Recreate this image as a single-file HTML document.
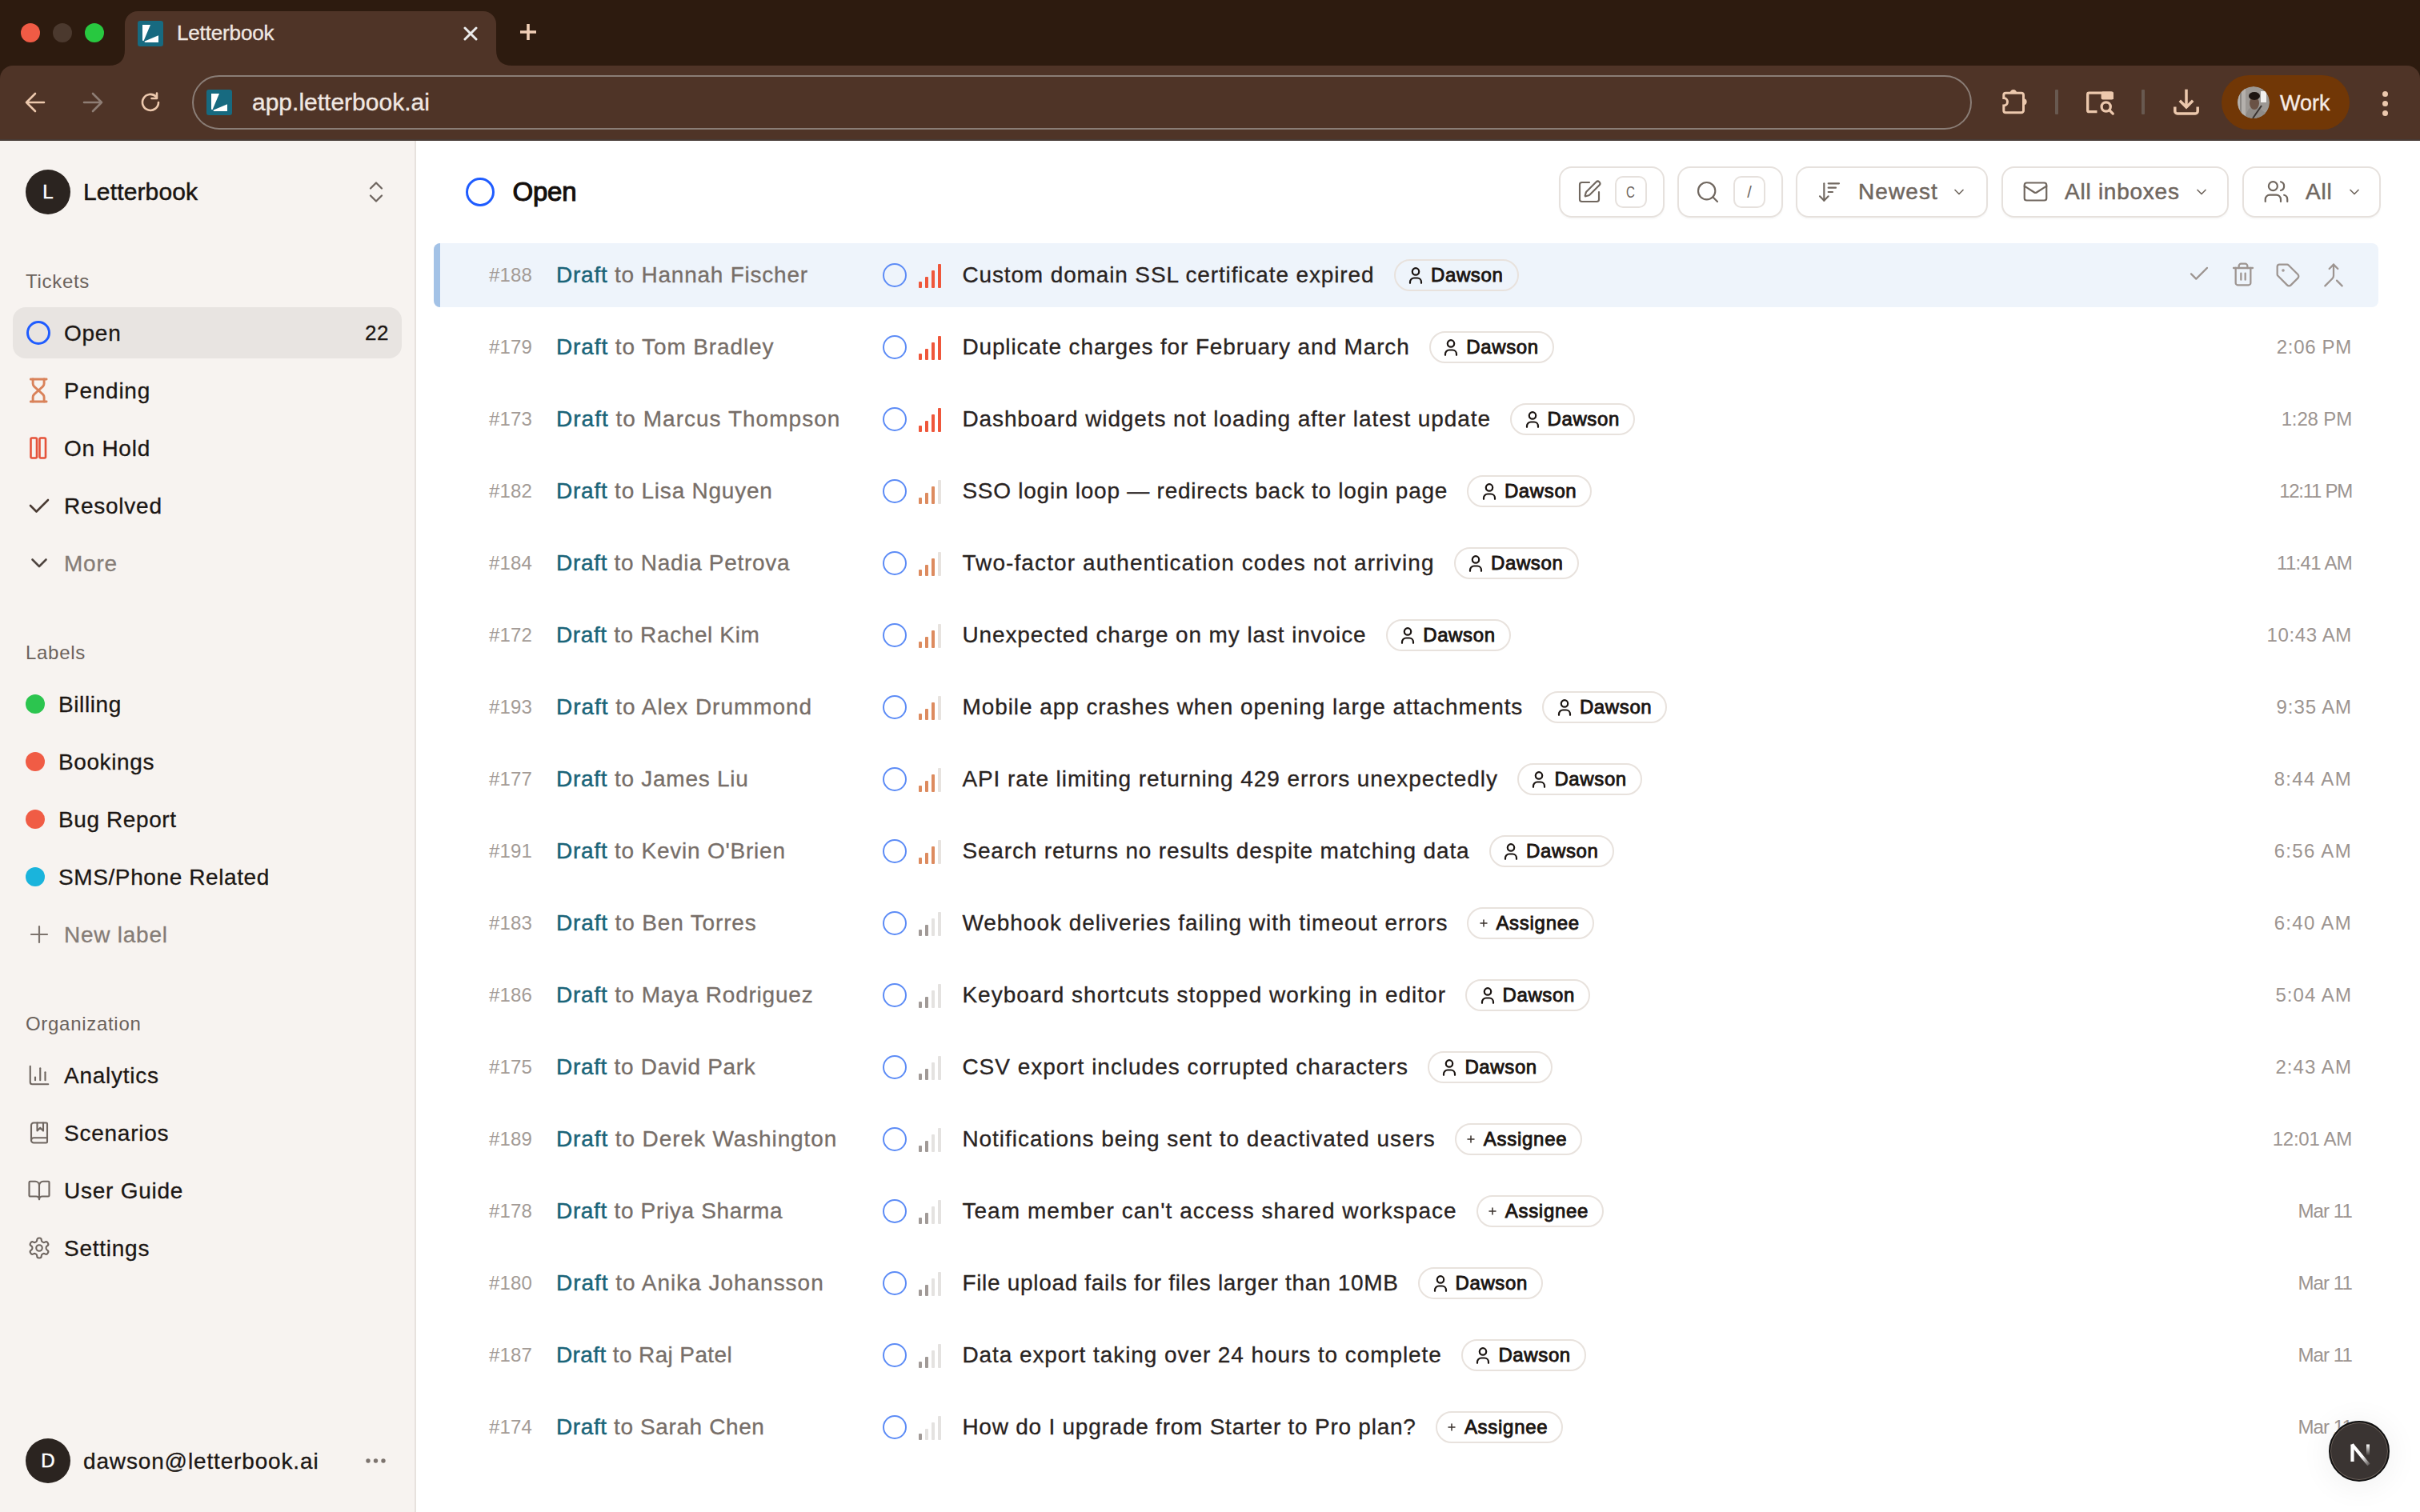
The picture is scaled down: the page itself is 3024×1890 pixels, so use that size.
<!DOCTYPE html>
<html><head><meta charset="utf-8"><style>
*{box-sizing:border-box;margin:0;padding:0}
html,body{width:3024px;height:1890px;overflow:hidden;background:#fff;font-family:"Liberation Sans",sans-serif}
#tabstrip{position:absolute;left:0;top:0;width:3024px;height:110px;background:#2d1b0f}
.tl{position:absolute;top:29px;width:24px;height:24px;border-radius:50%}
.fav{position:absolute;width:32px;height:32px}
.fav svg{display:block}
#tabtitle{position:absolute;left:221px;top:26px;line-height:30px;font-size:26px;color:#efe7e1;letter-spacing:-0.15px;-webkit-text-stroke:0.35px #efe7e1}
#toolbar{position:absolute;left:0;top:82px;width:3024px;height:92px;background:#4f3427;border-radius:16px 16px 0 0}
#tbline{position:absolute;left:0;top:174px;width:3024px;height:2px;background:#473b36}
#urlbar{position:absolute;left:240px;top:94px;width:2224px;height:68px;border:2px solid #8a7d76;border-radius:34px}
#urltext{position:absolute;left:315px;top:110px;line-height:36px;font-size:30px;color:#f0e7e1;-webkit-text-stroke:0.35px #f0e7e1}
.sep{position:absolute;top:112px;width:3.5px;height:31px;background:#685950;border-radius:1px}
#work{position:absolute;left:2776px;top:94px;width:160px;height:68px;border-radius:34px;background:#713706}
#avatar{position:absolute;left:20px;top:14px;width:40px;height:40px;border-radius:50%;overflow:hidden} #avatar svg{display:block}
#work span{position:absolute;left:73px;top:17px;line-height:36px;font-size:27px;color:#f6ece6;-webkit-text-stroke:0.35px #f6ece6}
.kdot{position:absolute;left:2977px;width:7px;height:7px;border-radius:50%;background:#ecc8ad}

#sidebar{position:absolute;left:0;top:176px;width:520px;height:1714px;background:#f7f3f0;border-right:2px solid #e7e2de}
#main{position:absolute;left:520px;top:176px;width:2504px;height:1714px;background:#fff}
.ws-av{position:absolute;left:32px;top:212px;width:56px;height:56px;border-radius:50%;background:#2b2420;color:#fff;font-size:24px;line-height:56px;text-align:center;-webkit-text-stroke:0.5px #fff}
.ws-name{position:absolute;left:104px;top:222px;line-height:36px;font-size:30px;color:#1a1512;letter-spacing:0.15px;-webkit-text-stroke:0.5px #1a1512}
.slab{position:absolute;left:32px;margin-top:1px;line-height:30px;font-size:24px;color:#6b625c;letter-spacing:0.7px}
.si{position:absolute;left:16px;width:486px;height:64px}
.sic{position:absolute;left:17px;top:16px;width:32px;height:32px;display:flex;align-items:center;justify-content:center}
.sic svg{display:block}
.sil{position:absolute;left:64px;top:15px;line-height:36px;font-size:28px;color:#1c1714;letter-spacing:0.75px;-webkit-text-stroke:0.3px currentColor}
.si.muted .sil{color:#857c76}
.shl{position:absolute;left:16px;width:486px;height:64px;background:#e8e4e1;border-radius:16px}
.cnt{position:absolute;left:400px;width:86px;height:64px;line-height:64px;text-align:right;font-size:26px;color:#1c1714;letter-spacing:0.5px;-webkit-text-stroke:0.3px #1c1714}
.lbl{position:absolute;left:16px;width:486px;height:64px}
.ldot{position:absolute;left:16px;top:20px;width:24px;height:24px;border-radius:50%}
.lll{position:absolute;left:57px;top:15px;line-height:36px;font-size:28px;color:#1c1714;letter-spacing:0.6px;-webkit-text-stroke:0.3px currentColor}
.me-av{position:absolute;left:32px;top:1798px;width:56px;height:56px;border-radius:50%;background:#2b2420;color:#fff;font-size:24px;line-height:56px;text-align:center;-webkit-text-stroke:0.5px #fff}
.me{position:absolute;left:104px;top:1809px;line-height:36px;font-size:28px;color:#1c1714;letter-spacing:0.85px;-webkit-text-stroke:0.3px #1c1714}
.medots{position:absolute;left:455px;top:1822px;opacity:0.9}

.hcirc{position:absolute;left:582px;top:222px;width:36px;height:36px;border:3.5px solid #1f5cff;border-radius:50%}
.htitle{position:absolute;left:640.5px;top:220px;line-height:40px;font-size:33px;color:#140f0c;letter-spacing:-0.2px;-webkit-text-stroke:1.05px #140f0c}
.btn{position:absolute;top:208px;height:64px;border:2px solid #e6e1dd;border-radius:16px;background:#fff;box-shadow:0 2px 2px rgba(0,0,0,0.03)}
.bi{position:absolute}
.bi svg{display:block}
.kbd{position:absolute;top:10px;width:40px;height:40px;border:2px solid #e6e1dd;border-radius:10px;text-align:center;line-height:36px;font-size:20px;color:#6e6660;font-family:"Liberation Sans",sans-serif}
.bt{position:absolute;top:12px;line-height:36px;font-size:28px;color:#70675f;letter-spacing:0.75px;-webkit-text-stroke:0.5px #70675f}

.row{position:absolute;left:542px;width:2430px;height:80px}
.row.sel{background:#eef4fb;border-radius:8px}
.row.sel::before{content:"";position:absolute;left:0;top:0;width:8px;height:80px;background:#a3c2e6;border-radius:8px 0 0 8px}
.rid{position:absolute;left:56px;width:80px;top:22px;line-height:36px;text-align:center;font-size:24px;color:#a39b96;letter-spacing:0.1px}
.who{position:absolute;left:153px;top:22px;line-height:36px;font-size:28px;color:#776e68;letter-spacing:0.75px;white-space:nowrap;-webkit-text-stroke:0.3px #776e68}
.draft{color:#1a6478;-webkit-text-stroke:0.45px #1a6478}
.stat{position:absolute;left:561px;top:25px;width:30px;height:30px;border:2.8px solid #5d8cf6;border-radius:50%}
.bars{position:absolute;left:606px;top:26px;width:30px;height:30px}
.subj{position:absolute;left:660.4px;top:22px;line-height:36px;font-size:28px;color:#29231f;white-space:nowrap;-webkit-text-stroke:0.3px #29231f}
.pill{position:absolute;top:20px;width:156px;height:40px;border:2px solid #e8e2dd;border-radius:20px}
.pill svg{display:block;position:absolute;left:16.6px;top:7.8px}
.pill span{position:absolute;left:44.5px;top:3px;line-height:30px;font-size:24px;color:#1a1411;letter-spacing:0.62px;-webkit-text-stroke:0.85px #1a1411}
.pill.asg{width:159px}
.pill.asg svg{left:12.4px;top:11.7px} .pill.asg span{left:34px;letter-spacing:0.72px}
.time{position:absolute;right:33px;top:22px;line-height:36px;font-size:24px;color:#9c9490;letter-spacing:0.35px}
.acts .act{position:absolute;top:24px}
.act svg{display:block}
#nbadge{position:absolute;left:2910px;top:1776px;width:76px;height:76px;border-radius:50%;background:#3a3432;border:2px solid #111;box-shadow:0 0 0 1px #6a5f58 inset,0 4px 40px rgba(0,0,0,0.07)}
</style></head><body>

<div id="tabstrip"></div>
<div class="tl" style="left:26px;background:#f05b45"></div>
<div class="tl" style="left:66px;background:#4b392e"></div>
<div class="tl" style="left:106px;background:#28c840"></div>
<svg style="position:absolute;left:136px;top:14px" width="504" height="70" viewBox="0 0 504 70"><path d="M0 68 Q20 68 20 48 V16 A16 16 0 0 1 36 0 H468 A16 16 0 0 1 484 16 V48 Q484 68 504 68 V70 H0Z" fill="#4f3427"/></svg>
<div class="fav" style="left:172px;top:26px"><svg width="32" height="32" viewBox="0 0 32 32"><rect width="32" height="32" rx="3" fill="#176a80"/><path d="M6 5H16L7.8 24.6C7.2 25.8 6 25.2 6 23.5Z M9.5 27H26V18.3L8.8 25.6C8.2 26 8.5 27 9.5 27Z" fill="#fff"/></svg></div>
<div id="tabtitle">Letterbook</div>
<div style="position:absolute;left:579px;top:33px"><svg width="18" height="18" viewBox="0 0 18 18" fill="none" stroke="#ebebeb" stroke-width="3" stroke-linecap="round" stroke-linejoin="round" style="display:block"><path d="M2 2l14 14M16 2L2 16"/></svg></div>
<div style="position:absolute;left:650px;top:30px"><svg width="20" height="20" viewBox="0 0 20 20" style="display:block"><path d="M0 10h20M10 0v20" stroke="#f1cfb6" stroke-width="3.6"/></svg></div>
<div id="toolbar"></div>
<div id="tbline"></div>
<div style="position:absolute;left:31px;top:115px"><svg width="26" height="26" viewBox="0 0 26 26" fill="none" stroke="#ecc8ad" stroke-width="2.6" stroke-linecap="round" stroke-linejoin="round" style="display:block"><path d="M24 13H2M13 2L2 13l11 11"/></svg></div>
<div style="position:absolute;left:103px;top:115px"><svg width="26" height="26" viewBox="0 0 26 26" fill="none" stroke="#8e7d74" stroke-width="2.6" stroke-linecap="round" stroke-linejoin="round" style="display:block"><path d="M2 13h22M13 2l11 11-11 11"/></svg></div>
<div style="position:absolute;left:174px;top:114px"><svg width="28" height="28" viewBox="0 0 28 28" fill="none" stroke="#ecc8ad" stroke-width="2.6" stroke-linecap="round" stroke-linejoin="round" style="display:block"><path d="M24 14a10 10 0 1 1-3-7.2"/><path d="M22 2.5v6.5h-6.5"/></svg></div>
<div id="urlbar"></div>
<div class="fav" style="left:258px;top:112px"><svg width="32" height="32" viewBox="0 0 32 32"><rect width="32" height="32" rx="3" fill="#176a80"/><path d="M6 5H16L7.8 24.6C7.2 25.8 6 25.2 6 23.5Z M9.5 27H26V18.3L8.8 25.6C8.2 26 8.5 27 9.5 27Z" fill="#fff"/></svg></div>
<div id="urltext">app.letterbook.ai</div>
<div style="position:absolute;left:2500px;top:108px"><svg width="40" height="40" viewBox="0 0 40 40" style="display:block"><path d="M3.8 10.7a2.5 2.5 0 0 1 2.5-2.5H26a2.5 2.5 0 0 1 2.5 2.5V30.2a2.5 2.5 0 0 1-2.5 2.5H6.3a2.5 2.5 0 0 1-2.5-2.5V24a4.7 4.7 0 0 0 0-9.4Z" fill="none" stroke="#ecc8ad" stroke-width="3"/><path d="M11.6 8.2a4.3 4.3 0 0 1 8.6 0Z" fill="#ecc8ad"/><path d="M28.5 15.2a4.1 4.1 0 0 1 0 8.2Z" fill="#ecc8ad"/></svg></div>
<div class="sep" style="left:2568px"></div>
<div style="position:absolute;left:2604px;top:108px"><svg width="40" height="40" viewBox="0 0 40 40" style="display:block" fill="none" stroke="#ecc8ad" stroke-width="3.3"><path d="M16.5 31.6H6.4a1.7 1.7 0 0 1-1.7-1.7V9.9a1.7 1.7 0 0 1 1.7-1.7H33.6a1.7 1.7 0 0 1 1.7 1.7V16"/><rect x="21.6" y="6.5" width="15.4" height="10" rx="2" fill="#ecc8ad" stroke="none"/><circle cx="27.7" cy="25.5" r="5.6"/><path d="M31.8 29.6L36.3 34.1" stroke-linecap="round"/></svg></div>
<div class="sep" style="left:2676px"></div>
<div style="position:absolute;left:2712px;top:108px"><svg width="40" height="40" viewBox="0 0 40 40" style="display:block" fill="none" stroke="#ecc8ad" stroke-width="3.5"><path d="M20 3.7V26"/><path d="M11.8 17.8L20 26L28.2 17.8"/><path d="M5.8 25.5V31a3 3 0 0 0 3 3H31.2a3 3 0 0 0 3-3V25.5"/></svg></div>
<div id="work"><div id="avatar"><svg width="40" height="40" viewBox="0 0 40 40"><defs><clipPath id="avc"><circle cx="20" cy="20" r="20"/></clipPath></defs><g clip-path="url(#avc)"><rect width="40" height="40" fill="#9c9894"/><rect x="0" y="0" width="10" height="40" fill="#b4b0ac"/><rect x="3" y="0" width="2" height="40" fill="#8a8682"/><rect x="29" y="6" width="7" height="14" fill="#f2f0ee"/><path d="M8 40L14 28Q20 24 27 27L36 34V40Z" fill="#8f8b87"/><path d="M19 40L30 24" stroke="#3a3330" stroke-width="2"/><ellipse cx="21" cy="21" rx="6" ry="8" fill="#6a5245"/><ellipse cx="21" cy="12" rx="7" ry="5" fill="#1d1512"/></g></svg></div><span>Work</span></div>
<div class="kdot" style="top:114px"></div><div class="kdot" style="top:126px"></div><div class="kdot" style="top:138px"></div>

<div id="sidebar"></div>
<div id="main"></div>
<div class="ws-av">L</div>
<div class="ws-name">Letterbook</div>
<div style="position:absolute;left:458px;top:226px"><svg width="24" height="28" viewBox="0 0 24 28" fill="none" stroke="#6f6660" stroke-width="2.3" stroke-linecap="round" stroke-linejoin="round" style="display:block"><path d="M5 9.5l7-7 7 7M5 18.5l7 7 7-7"/></svg></div>
<div class="slab" style="top:336px">Tickets</div>
<div class="slab" style="top:800px">Labels</div>
<div class="slab" style="top:1264px">Organization</div>
<div class="shl" style="top:384px"></div>
<div class="si " style="top:384px"><div class="sic"><div style="position:absolute;left:0;top:1px;width:30px;height:30px;border:3px solid #1f5cff;border-radius:50%"></div></div><div class="sil">Open</div></div>
<div class="cnt" style="top:384px">22</div>
<div class="si " style="top:456px"><div class="sic"><svg width="24" height="32" viewBox="0.9 0 24 32" fill="none" stroke="#d9825a" stroke-width="2.9" stroke-linecap="round" stroke-linejoin="round" ><path d="M2 2h20M2 30h20"/><path d="M5 2v5.5c0 1.5.6 2.6 1.6 3.6L12 16l5.4-4.9c1-1 1.6-2.1 1.6-3.6V2"/><path d="M5 30v-5.5c0-1.5.6-2.6 1.6-3.6L12 16l5.4 4.9c1 1 1.6 2.1 1.6 3.6V30"/></svg></div><div class="sil">Pending</div></div>
<div class="si " style="top:528px"><div class="sic"><svg width="24" height="28" viewBox="0 0 24 28" fill="none" stroke="#e5533a" stroke-width="2.6" stroke-linecap="round" stroke-linejoin="round" ><rect x="1.5" y="1.5" width="7.5" height="25" rx="1.5"/><rect x="12.5" y="1.5" width="7.5" height="25" rx="1.5"/></svg></div><div class="sil">On Hold</div></div>
<div class="si " style="top:600px"><div class="sic"><svg width="26" height="20" viewBox="0 0 26 20" fill="none" stroke="#4a3b33" stroke-width="2.6" stroke-linecap="round" stroke-linejoin="round" ><path d="M2 10l7.5 7.5L24 3"/></svg></div><div class="sil">Resolved</div></div>
<div class="si muted" style="top:672px"><div class="sic"><svg width="22" height="14" viewBox="0 0 22 14" fill="none" stroke="#4f4540" stroke-width="2.6" stroke-linecap="round" stroke-linejoin="round" ><path d="M2.5 2.5l8.5 8.5 8.5-8.5"/></svg></div><div class="sil">More</div></div>
<div class="lbl" style="top:848px"><div class="ldot" style="background:#2cc54f"></div><div class="lll">Billing</div></div>
<div class="lbl" style="top:920px"><div class="ldot" style="background:#f05c45"></div><div class="lll">Bookings</div></div>
<div class="lbl" style="top:992px"><div class="ldot" style="background:#f05c45"></div><div class="lll">Bug Report</div></div>
<div class="lbl" style="top:1064px"><div class="ldot" style="background:#1ab4dc"></div><div class="lll">SMS/Phone Related</div></div>
<div class="si muted" style="top:1136px"><div class="sic"><svg width="24" height="24" viewBox="0 0 24 24" fill="none" stroke="#7c736d" stroke-width="2.2" stroke-linecap="round" stroke-linejoin="round" ><path d="M2 12h20M12 2v20"/></svg></div><div class="sil">New label</div></div>
<div class="si " style="top:1312px"><div class="sic"><svg width="30" height="30" viewBox="0 0 24 24" fill="none" stroke="#6f6660" stroke-width="1.7" stroke-linecap="round" stroke-linejoin="round" ><path d="M3 3v16a2 2 0 0 0 2 2h16"/><path d="M18 17V9"/><path d="M13 17V5"/><path d="M8 17v-3"/></svg></div><div class="sil">Analytics</div></div>
<div class="si " style="top:1384px"><div class="sic"><svg width="30" height="30" viewBox="0 0 24 24" fill="none" stroke="#6f6660" stroke-width="1.7" stroke-linecap="round" stroke-linejoin="round" ><path d="M10 2v8l3-3 3 3V2"/><path d="M4 19.5v-15A2.5 2.5 0 0 1 6.5 2H19a1 1 0 0 1 1 1v18a1 1 0 0 1-1 1H6.5a1 1 0 0 1 0-5H20"/></svg></div><div class="sil">Scenarios</div></div>
<div class="si " style="top:1456px"><div class="sic"><svg width="30" height="30" viewBox="0 0 24 24" fill="none" stroke="#6f6660" stroke-width="1.7" stroke-linecap="round" stroke-linejoin="round" ><path d="M12 7v14"/><path d="M3 18a1 1 0 0 1-1-1V4a1 1 0 0 1 1-1h5a4 4 0 0 1 4 4 4 4 0 0 1 4-4h5a1 1 0 0 1 1 1v13a1 1 0 0 1-1 1h-6a3 3 0 0 0-3 3 3 3 0 0 0-3-3z"/></svg></div><div class="sil">User Guide</div></div>
<div class="si " style="top:1528px"><div class="sic"><svg width="30" height="30" viewBox="0 0 24 24" fill="none" stroke="#6f6660" stroke-width="1.7" stroke-linecap="round" stroke-linejoin="round" ><path d="M12.22 2h-.44a2 2 0 0 0-2 2v.18a2 2 0 0 1-1 1.73l-.43.25a2 2 0 0 1-2 0l-.15-.08a2 2 0 0 0-2.73.73l-.22.38a2 2 0 0 0 .73 2.73l.15.1a2 2 0 0 1 1 1.72v.51a2 2 0 0 1-1 1.74l-.15.09a2 2 0 0 0-.73 2.73l.22.38a2 2 0 0 0 2.73.73l.15-.08a2 2 0 0 1 2 0l.43.25a2 2 0 0 1 1 1.73V20a2 2 0 0 0 2 2h.44a2 2 0 0 0 2-2v-.18a2 2 0 0 1 1-1.73l.43-.25a2 2 0 0 1 2 0l.15.08a2 2 0 0 0 2.73-.73l.22-.39a2 2 0 0 0-.73-2.73l-.15-.08a2 2 0 0 1-1-1.74v-.5a2 2 0 0 1 1-1.74l.15-.09a2 2 0 0 0 .73-2.73l-.22-.38a2 2 0 0 0-2.73-.73l-.15.08a2 2 0 0 1-2 0l-.43-.25a2 2 0 0 1-1-1.73V4a2 2 0 0 0-2-2z"/><circle cx="12" cy="12" r="3"/></svg></div><div class="sil">Settings</div></div>
<div class="me-av">D</div>
<div class="me">dawson@letterbook.ai</div>
<div class="medots"><svg width="30" height="8" viewBox="0 0 30 8" fill="#6f6660" stroke-width="0" stroke-linecap="round" stroke-linejoin="round" fill="#6f6660" style="display:block"><circle cx="5" cy="4" r="2.7"/><circle cx="14.5" cy="4" r="2.7"/><circle cx="24" cy="4" r="2.7"/></svg></div>
<div class="hcirc"></div>
<div class="htitle">Open</div>

<div class="btn" style="left:1948px;width:132px">
  <div class="bi" style="left:20px;top:14px"><svg width="32" height="32" viewBox="0 0 24 24" fill="none" stroke="#70675f" stroke-width="1.6" stroke-linecap="round" stroke-linejoin="round" ><path d="M12 3H5a2 2 0 0 0-2 2v14a2 2 0 0 0 2 2h14a2 2 0 0 0 2-2v-7"/><path d="M18.375 2.625a1 1 0 0 1 3 3l-9.013 9.014a2 2 0 0 1-.853.505l-2.873.84a.5.5 0 0 1-.62-.62l.84-2.873a2 2 0 0 1 .506-.852z"/></svg></div>
  <div class="kbd" style="left:68px"><span style="display:inline-block;transform:scaleX(0.72);font-size:21px">C</span></div>
</div>
<div class="btn" style="left:2096px;width:132px">
  <div class="bi" style="left:20px;top:14px"><svg width="32" height="32" viewBox="0 0 24 24" fill="none" stroke="#70675f" stroke-width="1.6" stroke-linecap="round" stroke-linejoin="round" ><circle cx="11" cy="11" r="8"/><path d="m21 21-4.3-4.3"/></svg></div>
  <div class="kbd" style="left:68px">/</div>
</div>
<div class="btn" style="left:2244px;width:240px">
  <div class="bi" style="left:24px;top:14px"><svg width="32" height="32" viewBox="0 0 24 24" fill="none" stroke="#70675f" stroke-width="1.6" stroke-linecap="round" stroke-linejoin="round" ><path d="m3 16 4 4 4-4"/><path d="M7 20V4"/><path d="M11 4h10"/><path d="M11 8h7"/><path d="M11 12h4"/></svg></div>
  <div class="bt" style="left:76px;letter-spacing:1.1px">Newest</div>
  <div class="bi" style="left:192px;top:20px"><svg width="20" height="20" viewBox="0 0 24 24" fill="none" stroke="#70675f" stroke-width="2" stroke-linecap="round" stroke-linejoin="round" ><path d="m6 9 6 6 6-6"/></svg></div>
</div>
<div class="btn" style="left:2501px;width:284px">
  <div class="bi" style="left:24px;top:13px"><svg width="33" height="33" viewBox="0 0 24 24" fill="none" stroke="#70675f" stroke-width="1.6" stroke-linecap="round" stroke-linejoin="round" ><rect width="20" height="16" x="2" y="4" rx="2"/><path d="m22 7-8.97 5.7a1.94 1.94 0 0 1-2.06 0L2 7"/></svg></div>
  <div class="bt" style="left:77px">All inboxes</div>
  <div class="bi" style="left:238px;top:20px"><svg width="20" height="20" viewBox="0 0 24 24" fill="none" stroke="#70675f" stroke-width="2" stroke-linecap="round" stroke-linejoin="round" ><path d="m6 9 6 6 6-6"/></svg></div>
</div>
<div class="btn" style="left:2802px;width:173px">
  <div class="bi" style="left:24px;top:13px"><svg width="33" height="33" viewBox="0 0 24 24" fill="none" stroke="#70675f" stroke-width="1.6" stroke-linecap="round" stroke-linejoin="round" ><path d="M16 21v-2a4 4 0 0 0-4-4H6a4 4 0 0 0-4 4v2"/><circle cx="9" cy="7" r="4"/><path d="M22 21v-2a4 4 0 0 0-3-3.87"/><path d="M16 3.13a4 4 0 0 1 0 7.75"/></svg></div>
  <div class="bt" style="left:77px">All</div>
  <div class="bi" style="left:128px;top:20px"><svg width="20" height="20" viewBox="0 0 24 24" fill="none" stroke="#70675f" stroke-width="2" stroke-linecap="round" stroke-linejoin="round" ><path d="m6 9 6 6 6-6"/></svg></div>
</div>

<div class="row sel" style="top:304px">
<div class="rid">#188</div>
<div class="who" style="letter-spacing:0.766px"><span class="draft">Draft</span> to Hannah Fischer</div>
<div class="stat"></div>
<div class="bars"><div style="position:absolute;left:0px;top:22px;width:4px;height:8px;background:#ef573b;border-radius:1px"></div><div style="position:absolute;left:8px;top:16px;width:4px;height:14px;background:#ef573b;border-radius:1px"></div><div style="position:absolute;left:16px;top:8px;width:4px;height:22px;background:#ef573b;border-radius:1px"></div><div style="position:absolute;left:24px;top:0px;width:4px;height:30px;background:#ef573b;border-radius:1px"></div></div>
<div class="subj" style="letter-spacing:0.865px">Custom domain SSL certificate expired</div>
<div class="pill" style="left:1199.5px"><svg width="18" height="21" viewBox="0 0 18 21" fill="none" stroke="#1a1411" stroke-width="2.2" stroke-linecap="round" stroke-linejoin="round" ><circle cx="9" cy="5.4" r="4.2"/><path d="M2 19.8v-1.3a5 5 0 0 1 5-5h4a5 5 0 0 1 5 5v1.3"/></svg><span>Dawson</span></div>
<div class="acts"><div class="act" style="left:2191px"><svg width="30" height="30" viewBox="0 0 24 24" fill="none" stroke="#9d9591" stroke-width="1.75" stroke-linecap="round" stroke-linejoin="round" ><path d="M20 5.5 9 16.5l-5-5"/></svg></div><div class="act" style="left:2245px;top:23px"><svg width="32" height="32" viewBox="0 0 24 24" fill="none" stroke="#9d9591" stroke-width="1.7" stroke-linecap="round" stroke-linejoin="round" ><path d="M3 6h18"/><path d="M19 6v14c0 1-1 2-2 2H7c-1 0-2-1-2-2V6"/><path d="M8 6V4c0-1 1-2 2-2h4c1 0 2 1 2 2v2"/><line x1="10" x2="10" y1="11" y2="17"/><line x1="14" x2="14" y1="11" y2="17"/></svg></div><div class="act" style="left:2301px"><svg width="32" height="32" viewBox="0 0 24 24" fill="none" stroke="#9d9591" stroke-width="1.7" stroke-linecap="round" stroke-linejoin="round" ><path d="M12.586 2.586A2 2 0 0 0 11.172 2H4a2 2 0 0 0-2 2v7.172a2 2 0 0 0 .586 1.414l8.704 8.704a2.426 2.426 0 0 0 3.42 0l6.58-6.58a2.426 2.426 0 0 0 0-3.42z"/><circle cx="7.5" cy="7.5" r=".5" fill="#9d9591"/></svg></div><div class="act" style="left:2358px"><svg width="32" height="32" viewBox="0 0 24 24" fill="none" stroke="#9d9591" stroke-width="1.7" stroke-linecap="round" stroke-linejoin="round" ><path d="m8 6 4-4 4 4"/><path d="M12 2v10.3a4 4 0 0 1-1.172 2.872L4 22"/><path d="m20 22-5-5"/></svg></div></div>
</div>
<div class="row" style="top:394px">
<div class="rid">#179</div>
<div class="who" style="letter-spacing:0.884px"><span class="draft">Draft</span> to Tom Bradley</div>
<div class="stat"></div>
<div class="bars"><div style="position:absolute;left:0px;top:22px;width:4px;height:8px;background:#ef573b;border-radius:1px"></div><div style="position:absolute;left:8px;top:16px;width:4px;height:14px;background:#ef573b;border-radius:1px"></div><div style="position:absolute;left:16px;top:8px;width:4px;height:22px;background:#ef573b;border-radius:1px"></div><div style="position:absolute;left:24px;top:0px;width:4px;height:30px;background:#ef573b;border-radius:1px"></div></div>
<div class="subj" style="letter-spacing:0.870px">Duplicate charges for February and March</div>
<div class="pill" style="left:1243.8px"><svg width="18" height="21" viewBox="0 0 18 21" fill="none" stroke="#1a1411" stroke-width="2.2" stroke-linecap="round" stroke-linejoin="round" ><circle cx="9" cy="5.4" r="4.2"/><path d="M2 19.8v-1.3a5 5 0 0 1 5-5h4a5 5 0 0 1 5 5v1.3"/></svg><span>Dawson</span></div>
<div class="time" style="letter-spacing:0.685px">2:06 PM</div>
</div>
<div class="row" style="top:484px">
<div class="rid">#173</div>
<div class="who" style="letter-spacing:1.015px"><span class="draft">Draft</span> to Marcus Thompson</div>
<div class="stat"></div>
<div class="bars"><div style="position:absolute;left:0px;top:22px;width:4px;height:8px;background:#ef573b;border-radius:1px"></div><div style="position:absolute;left:8px;top:16px;width:4px;height:14px;background:#ef573b;border-radius:1px"></div><div style="position:absolute;left:16px;top:8px;width:4px;height:22px;background:#ef573b;border-radius:1px"></div><div style="position:absolute;left:24px;top:0px;width:4px;height:30px;background:#ef573b;border-radius:1px"></div></div>
<div class="subj" style="letter-spacing:0.900px">Dashboard widgets not loading after latest update</div>
<div class="pill" style="left:1345.0px"><svg width="18" height="21" viewBox="0 0 18 21" fill="none" stroke="#1a1411" stroke-width="2.2" stroke-linecap="round" stroke-linejoin="round" ><circle cx="9" cy="5.4" r="4.2"/><path d="M2 19.8v-1.3a5 5 0 0 1 5-5h4a5 5 0 0 1 5 5v1.3"/></svg><span>Dawson</span></div>
<div class="time" style="letter-spacing:-0.148px">1:28 PM</div>
</div>
<div class="row" style="top:574px">
<div class="rid">#182</div>
<div class="who" style="letter-spacing:0.771px"><span class="draft">Draft</span> to Lisa Nguyen</div>
<div class="stat"></div>
<div class="bars"><div style="position:absolute;left:0px;top:22px;width:4px;height:8px;background:#dd8b5f;border-radius:1px"></div><div style="position:absolute;left:8px;top:16px;width:4px;height:14px;background:#dd8b5f;border-radius:1px"></div><div style="position:absolute;left:16px;top:8px;width:4px;height:22px;background:#dd8b5f;border-radius:1px"></div><div style="position:absolute;left:24px;top:0px;width:4px;height:30px;background:#e7e3df;border-radius:1px"></div></div>
<div class="subj" style="letter-spacing:0.755px">SSO login loop — redirects back to login page</div>
<div class="pill" style="left:1291.4px"><svg width="18" height="21" viewBox="0 0 18 21" fill="none" stroke="#1a1411" stroke-width="2.2" stroke-linecap="round" stroke-linejoin="round" ><circle cx="9" cy="5.4" r="4.2"/><path d="M2 19.8v-1.3a5 5 0 0 1 5-5h4a5 5 0 0 1 5 5v1.3"/></svg><span>Dawson</span></div>
<div class="time" style="letter-spacing:-1.265px">12:11 PM</div>
</div>
<div class="row" style="top:664px">
<div class="rid">#184</div>
<div class="who" style="letter-spacing:0.689px"><span class="draft">Draft</span> to Nadia Petrova</div>
<div class="stat"></div>
<div class="bars"><div style="position:absolute;left:0px;top:22px;width:4px;height:8px;background:#dd8b5f;border-radius:1px"></div><div style="position:absolute;left:8px;top:16px;width:4px;height:14px;background:#dd8b5f;border-radius:1px"></div><div style="position:absolute;left:16px;top:8px;width:4px;height:22px;background:#dd8b5f;border-radius:1px"></div><div style="position:absolute;left:24px;top:0px;width:4px;height:30px;background:#e7e3df;border-radius:1px"></div></div>
<div class="subj" style="letter-spacing:1.104px">Two-factor authentication codes not arriving</div>
<div class="pill" style="left:1274.5px"><svg width="18" height="21" viewBox="0 0 18 21" fill="none" stroke="#1a1411" stroke-width="2.2" stroke-linecap="round" stroke-linejoin="round" ><circle cx="9" cy="5.4" r="4.2"/><path d="M2 19.8v-1.3a5 5 0 0 1 5-5h4a5 5 0 0 1 5 5v1.3"/></svg><span>Dawson</span></div>
<div class="time" style="letter-spacing:-0.718px">11:41 AM</div>
</div>
<div class="row" style="top:754px">
<div class="rid">#172</div>
<div class="who" style="letter-spacing:0.614px"><span class="draft">Draft</span> to Rachel Kim</div>
<div class="stat"></div>
<div class="bars"><div style="position:absolute;left:0px;top:22px;width:4px;height:8px;background:#dd8b5f;border-radius:1px"></div><div style="position:absolute;left:8px;top:16px;width:4px;height:14px;background:#dd8b5f;border-radius:1px"></div><div style="position:absolute;left:16px;top:8px;width:4px;height:22px;background:#dd8b5f;border-radius:1px"></div><div style="position:absolute;left:24px;top:0px;width:4px;height:30px;background:#e7e3df;border-radius:1px"></div></div>
<div class="subj" style="letter-spacing:0.890px">Unexpected charge on my last invoice</div>
<div class="pill" style="left:1189.7px"><svg width="18" height="21" viewBox="0 0 18 21" fill="none" stroke="#1a1411" stroke-width="2.2" stroke-linecap="round" stroke-linejoin="round" ><circle cx="9" cy="5.4" r="4.2"/><path d="M2 19.8v-1.3a5 5 0 0 1 5-5h4a5 5 0 0 1 5 5v1.3"/></svg><span>Dawson</span></div>
<div class="time" style="letter-spacing:0.642px">10:43 AM</div>
</div>
<div class="row" style="top:844px">
<div class="rid">#193</div>
<div class="who" style="letter-spacing:0.972px"><span class="draft">Draft</span> to Alex Drummond</div>
<div class="stat"></div>
<div class="bars"><div style="position:absolute;left:0px;top:22px;width:4px;height:8px;background:#dd8b5f;border-radius:1px"></div><div style="position:absolute;left:8px;top:16px;width:4px;height:14px;background:#dd8b5f;border-radius:1px"></div><div style="position:absolute;left:16px;top:8px;width:4px;height:22px;background:#dd8b5f;border-radius:1px"></div><div style="position:absolute;left:24px;top:0px;width:4px;height:30px;background:#e7e3df;border-radius:1px"></div></div>
<div class="subj" style="letter-spacing:0.931px">Mobile app crashes when opening large attachments</div>
<div class="pill" style="left:1385.4px"><svg width="18" height="21" viewBox="0 0 18 21" fill="none" stroke="#1a1411" stroke-width="2.2" stroke-linecap="round" stroke-linejoin="round" ><circle cx="9" cy="5.4" r="4.2"/><path d="M2 19.8v-1.3a5 5 0 0 1 5-5h4a5 5 0 0 1 5 5v1.3"/></svg><span>Dawson</span></div>
<div class="time" style="letter-spacing:0.906px">9:35 AM</div>
</div>
<div class="row" style="top:934px">
<div class="rid">#177</div>
<div class="who" style="letter-spacing:0.741px"><span class="draft">Draft</span> to James Liu</div>
<div class="stat"></div>
<div class="bars"><div style="position:absolute;left:0px;top:22px;width:4px;height:8px;background:#dd8b5f;border-radius:1px"></div><div style="position:absolute;left:8px;top:16px;width:4px;height:14px;background:#dd8b5f;border-radius:1px"></div><div style="position:absolute;left:16px;top:8px;width:4px;height:22px;background:#dd8b5f;border-radius:1px"></div><div style="position:absolute;left:24px;top:0px;width:4px;height:30px;background:#e7e3df;border-radius:1px"></div></div>
<div class="subj" style="letter-spacing:0.919px">API rate limiting returning 429 errors unexpectedly</div>
<div class="pill" style="left:1353.9px"><svg width="18" height="21" viewBox="0 0 18 21" fill="none" stroke="#1a1411" stroke-width="2.2" stroke-linecap="round" stroke-linejoin="round" ><circle cx="9" cy="5.4" r="4.2"/><path d="M2 19.8v-1.3a5 5 0 0 1 5-5h4a5 5 0 0 1 5 5v1.3"/></svg><span>Dawson</span></div>
<div class="time" style="letter-spacing:1.323px">8:44 AM</div>
</div>
<div class="row" style="top:1024px">
<div class="rid">#191</div>
<div class="who" style="letter-spacing:0.766px"><span class="draft">Draft</span> to Kevin O'Brien</div>
<div class="stat"></div>
<div class="bars"><div style="position:absolute;left:0px;top:22px;width:4px;height:8px;background:#dd8b5f;border-radius:1px"></div><div style="position:absolute;left:8px;top:16px;width:4px;height:14px;background:#dd8b5f;border-radius:1px"></div><div style="position:absolute;left:16px;top:8px;width:4px;height:22px;background:#dd8b5f;border-radius:1px"></div><div style="position:absolute;left:24px;top:0px;width:4px;height:30px;background:#e7e3df;border-radius:1px"></div></div>
<div class="subj" style="letter-spacing:0.840px">Search returns no results despite matching data</div>
<div class="pill" style="left:1318.6px"><svg width="18" height="21" viewBox="0 0 18 21" fill="none" stroke="#1a1411" stroke-width="2.2" stroke-linecap="round" stroke-linejoin="round" ><circle cx="9" cy="5.4" r="4.2"/><path d="M2 19.8v-1.3a5 5 0 0 1 5-5h4a5 5 0 0 1 5 5v1.3"/></svg><span>Dawson</span></div>
<div class="time" style="letter-spacing:1.323px">6:56 AM</div>
</div>
<div class="row" style="top:1114px">
<div class="rid">#183</div>
<div class="who" style="letter-spacing:0.851px"><span class="draft">Draft</span> to Ben Torres</div>
<div class="stat"></div>
<div class="bars"><div style="position:absolute;left:0px;top:22px;width:4px;height:8px;background:#a19a97;border-radius:1px"></div><div style="position:absolute;left:8px;top:16px;width:4px;height:14px;background:#a19a97;border-radius:1px"></div><div style="position:absolute;left:16px;top:8px;width:4px;height:22px;background:#e4e2e0;border-radius:1px"></div><div style="position:absolute;left:24px;top:0px;width:4px;height:30px;background:#e4e2e0;border-radius:1px"></div></div>
<div class="subj" style="letter-spacing:0.959px">Webhook deliveries failing with timeout errors</div>
<div class="pill asg" style="left:1291.4px"><svg width="12" height="12" viewBox="0 0 12 12" fill="none" stroke="#3a322d" stroke-width="1.5" stroke-linecap="round" stroke-linejoin="round" ><path d="M2 6h8M6 2v8"/></svg><span>Assignee</span></div>
<div class="time" style="letter-spacing:1.323px">6:40 AM</div>
</div>
<div class="row" style="top:1204px">
<div class="rid">#186</div>
<div class="who" style="letter-spacing:0.783px"><span class="draft">Draft</span> to Maya Rodriguez</div>
<div class="stat"></div>
<div class="bars"><div style="position:absolute;left:0px;top:22px;width:4px;height:8px;background:#a19a97;border-radius:1px"></div><div style="position:absolute;left:8px;top:16px;width:4px;height:14px;background:#a19a97;border-radius:1px"></div><div style="position:absolute;left:16px;top:8px;width:4px;height:22px;background:#e4e2e0;border-radius:1px"></div><div style="position:absolute;left:24px;top:0px;width:4px;height:30px;background:#e4e2e0;border-radius:1px"></div></div>
<div class="subj" style="letter-spacing:1.006px">Keyboard shortcuts stopped working in editor</div>
<div class="pill" style="left:1289.0px"><svg width="18" height="21" viewBox="0 0 18 21" fill="none" stroke="#1a1411" stroke-width="2.2" stroke-linecap="round" stroke-linejoin="round" ><circle cx="9" cy="5.4" r="4.2"/><path d="M2 19.8v-1.3a5 5 0 0 1 5-5h4a5 5 0 0 1 5 5v1.3"/></svg><span>Dawson</span></div>
<div class="time" style="letter-spacing:1.073px">5:04 AM</div>
</div>
<div class="row" style="top:1294px">
<div class="rid">#175</div>
<div class="who" style="letter-spacing:0.682px"><span class="draft">Draft</span> to David Park</div>
<div class="stat"></div>
<div class="bars"><div style="position:absolute;left:0px;top:22px;width:4px;height:8px;background:#a19a97;border-radius:1px"></div><div style="position:absolute;left:8px;top:16px;width:4px;height:14px;background:#a19a97;border-radius:1px"></div><div style="position:absolute;left:16px;top:8px;width:4px;height:22px;background:#e4e2e0;border-radius:1px"></div><div style="position:absolute;left:24px;top:0px;width:4px;height:30px;background:#e4e2e0;border-radius:1px"></div></div>
<div class="subj" style="letter-spacing:0.981px">CSV export includes corrupted characters</div>
<div class="pill" style="left:1241.9px"><svg width="18" height="21" viewBox="0 0 18 21" fill="none" stroke="#1a1411" stroke-width="2.2" stroke-linecap="round" stroke-linejoin="round" ><circle cx="9" cy="5.4" r="4.2"/><path d="M2 19.8v-1.3a5 5 0 0 1 5-5h4a5 5 0 0 1 5 5v1.3"/></svg><span>Dawson</span></div>
<div class="time" style="letter-spacing:1.073px">2:43 AM</div>
</div>
<div class="row" style="top:1384px">
<div class="rid">#189</div>
<div class="who" style="letter-spacing:0.892px"><span class="draft">Draft</span> to Derek Washington</div>
<div class="stat"></div>
<div class="bars"><div style="position:absolute;left:0px;top:22px;width:4px;height:8px;background:#a19a97;border-radius:1px"></div><div style="position:absolute;left:8px;top:16px;width:4px;height:14px;background:#a19a97;border-radius:1px"></div><div style="position:absolute;left:16px;top:8px;width:4px;height:22px;background:#e4e2e0;border-radius:1px"></div><div style="position:absolute;left:24px;top:0px;width:4px;height:30px;background:#e4e2e0;border-radius:1px"></div></div>
<div class="subj" style="letter-spacing:0.966px">Notifications being sent to deactivated users</div>
<div class="pill asg" style="left:1275.8px"><svg width="12" height="12" viewBox="0 0 12 12" fill="none" stroke="#3a322d" stroke-width="1.5" stroke-linecap="round" stroke-linejoin="round" ><path d="M2 6h8M6 2v8"/></svg><span>Assignee</span></div>
<div class="time" style="letter-spacing:-0.272px">12:01 AM</div>
</div>
<div class="row" style="top:1474px">
<div class="rid">#178</div>
<div class="who" style="letter-spacing:0.665px"><span class="draft">Draft</span> to Priya Sharma</div>
<div class="stat"></div>
<div class="bars"><div style="position:absolute;left:0px;top:22px;width:4px;height:8px;background:#a19a97;border-radius:1px"></div><div style="position:absolute;left:8px;top:16px;width:4px;height:14px;background:#a19a97;border-radius:1px"></div><div style="position:absolute;left:16px;top:8px;width:4px;height:22px;background:#e4e2e0;border-radius:1px"></div><div style="position:absolute;left:24px;top:0px;width:4px;height:30px;background:#e4e2e0;border-radius:1px"></div></div>
<div class="subj" style="letter-spacing:1.059px">Team member can't access shared workspace</div>
<div class="pill asg" style="left:1302.7px"><svg width="12" height="12" viewBox="0 0 12 12" fill="none" stroke="#3a322d" stroke-width="1.5" stroke-linecap="round" stroke-linejoin="round" ><path d="M2 6h8M6 2v8"/></svg><span>Assignee</span></div>
<div class="time" style="letter-spacing:-0.884px">Mar 11</div>
</div>
<div class="row" style="top:1564px">
<div class="rid">#180</div>
<div class="who" style="letter-spacing:0.974px"><span class="draft">Draft</span> to Anika Johansson</div>
<div class="stat"></div>
<div class="bars"><div style="position:absolute;left:0px;top:22px;width:4px;height:8px;background:#a19a97;border-radius:1px"></div><div style="position:absolute;left:8px;top:16px;width:4px;height:14px;background:#a19a97;border-radius:1px"></div><div style="position:absolute;left:16px;top:8px;width:4px;height:22px;background:#e4e2e0;border-radius:1px"></div><div style="position:absolute;left:24px;top:0px;width:4px;height:30px;background:#e4e2e0;border-radius:1px"></div></div>
<div class="subj" style="letter-spacing:0.685px">File upload fails for files larger than 10MB</div>
<div class="pill" style="left:1230.0px"><svg width="18" height="21" viewBox="0 0 18 21" fill="none" stroke="#1a1411" stroke-width="2.2" stroke-linecap="round" stroke-linejoin="round" ><circle cx="9" cy="5.4" r="4.2"/><path d="M2 19.8v-1.3a5 5 0 0 1 5-5h4a5 5 0 0 1 5 5v1.3"/></svg><span>Dawson</span></div>
<div class="time" style="letter-spacing:-0.884px">Mar 11</div>
</div>
<div class="row" style="top:1654px">
<div class="rid">#187</div>
<div class="who" style="letter-spacing:0.382px"><span class="draft">Draft</span> to Raj Patel</div>
<div class="stat"></div>
<div class="bars"><div style="position:absolute;left:0px;top:22px;width:4px;height:8px;background:#a19a97;border-radius:1px"></div><div style="position:absolute;left:8px;top:16px;width:4px;height:14px;background:#a19a97;border-radius:1px"></div><div style="position:absolute;left:16px;top:8px;width:4px;height:22px;background:#e4e2e0;border-radius:1px"></div><div style="position:absolute;left:24px;top:0px;width:4px;height:30px;background:#e4e2e0;border-radius:1px"></div></div>
<div class="subj" style="letter-spacing:0.924px">Data export taking over 24 hours to complete</div>
<div class="pill" style="left:1283.9px"><svg width="18" height="21" viewBox="0 0 18 21" fill="none" stroke="#1a1411" stroke-width="2.2" stroke-linecap="round" stroke-linejoin="round" ><circle cx="9" cy="5.4" r="4.2"/><path d="M2 19.8v-1.3a5 5 0 0 1 5-5h4a5 5 0 0 1 5 5v1.3"/></svg><span>Dawson</span></div>
<div class="time" style="letter-spacing:-0.884px">Mar 11</div>
</div>
<div class="row" style="top:1744px">
<div class="rid">#174</div>
<div class="who" style="letter-spacing:0.604px"><span class="draft">Draft</span> to Sarah Chen</div>
<div class="stat"></div>
<div class="bars"><div style="position:absolute;left:0px;top:22px;width:4px;height:8px;background:#a19a97;border-radius:1px"></div><div style="position:absolute;left:8px;top:16px;width:4px;height:14px;background:#e4e2e0;border-radius:1px"></div><div style="position:absolute;left:16px;top:8px;width:4px;height:22px;background:#e4e2e0;border-radius:1px"></div><div style="position:absolute;left:24px;top:0px;width:4px;height:30px;background:#e4e2e0;border-radius:1px"></div></div>
<div class="subj" style="letter-spacing:0.759px">How do I upgrade from Starter to Pro plan?</div>
<div class="pill asg" style="left:1251.9px"><svg width="12" height="12" viewBox="0 0 12 12" fill="none" stroke="#3a322d" stroke-width="1.5" stroke-linecap="round" stroke-linejoin="round" ><path d="M2 6h8M6 2v8"/></svg><span>Assignee</span></div>
<div class="time" style="letter-spacing:-0.884px">Mar 11</div>
</div>
<div id="nbadge"><svg width="76" height="76" viewBox="0 0 76 76" style="position:absolute;left:-2px;top:-2px"><defs><linearGradient id="ng" x1="0" y1="0" x2="0" y2="1"><stop offset="0" stop-color="#fff"/><stop offset="1" stop-color="#fff" stop-opacity="0"/></linearGradient><linearGradient id="nd" x1="0" y1="0" x2="1" y2="1"><stop offset="0.6" stop-color="#fff"/><stop offset="1" stop-color="#fff" stop-opacity="0.2"/></linearGradient></defs><path d="M29.5 51V29.5" stroke="#fff" stroke-width="4.2" fill="none"/><path d="M29 29.5L50 55" stroke="url(#nd)" stroke-width="4.2" fill="none"/><rect x="47" y="29.5" width="4" height="14" fill="url(#ng)"/></svg></div>
</body></html>
